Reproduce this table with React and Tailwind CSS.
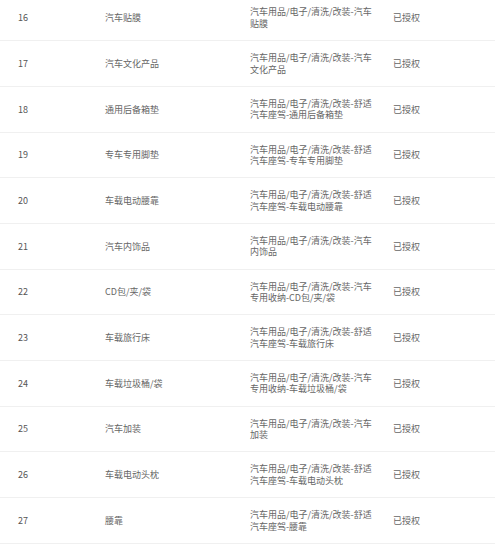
const rows = [
  ["16", "汽车贴膜", "汽车用品/电子/清洗/改装-汽车贴膜"],
  ["17", "汽车文化产品", "汽车用品/电子/清洗/改装-汽车文化产品"],
  ["18", "通用后备箱垫", "汽车用品/电子/清洗/改装-舒适汽车座驾-通用后备箱垫"],
  ["19", "专车专用脚垫", "汽车用品/电子/清洗/改装-舒适汽车座驾-专车专用脚垫"],
  ["20", "车载电动腰靠", "汽车用品/电子/清洗/改装-舒适汽车座驾-车载电动腰靠"],
  ["21", "汽车内饰品", "汽车用品/电子/清洗/改装-汽车内饰品"],
  ["22", "CD包/夹/袋", "汽车用品/电子/清洗/改装-汽车专用收纳-CD包/夹/袋"],
  ["23", "车载旅行床", "汽车用品/电子/清洗/改装-舒适汽车座驾-车载旅行床"],
  ["24", "车载垃圾桶/袋", "汽车用品/电子/清洗/改装-汽车专用收纳-车载垃圾桶/袋"],
  ["25", "汽车加装", "汽车用品/电子/清洗/改装-汽车加装"],
  ["26", "车载电动头枕", "汽车用品/电子/清洗/改装-舒适汽车座驾-车载电动头枕"],
  ["27", "腰靠", "汽车用品/电子/清洗/改装-舒适汽车座驾-腰靠"],
];

export default function App() {
  return (
    <div
      className="w-[495px] h-[550px] overflow-hidden bg-white text-[9px] leading-[11.5px] text-[#666]"
      style={{ fontFamily: '"Microsoft YaHei", "Noto Sans CJK SC", "Noto Sans", sans-serif' }}
    >
      <div className="-mt-[4.4px]">
        {rows.map(([n, name, cat]) => (
          <div key={n} className="flex items-center h-[45.7px] border-b border-[#f0f0f0]">
            <div className="w-[105px] pl-[18px] text-[#555]">{n}</div>
            <div className="w-[145px]">{name}</div>
            <div className="w-[143px] pr-[16px]">{cat}</div>
            <div className="flex-1">已授权</div>
          </div>
        ))}
      </div>
    </div>
  );
}
